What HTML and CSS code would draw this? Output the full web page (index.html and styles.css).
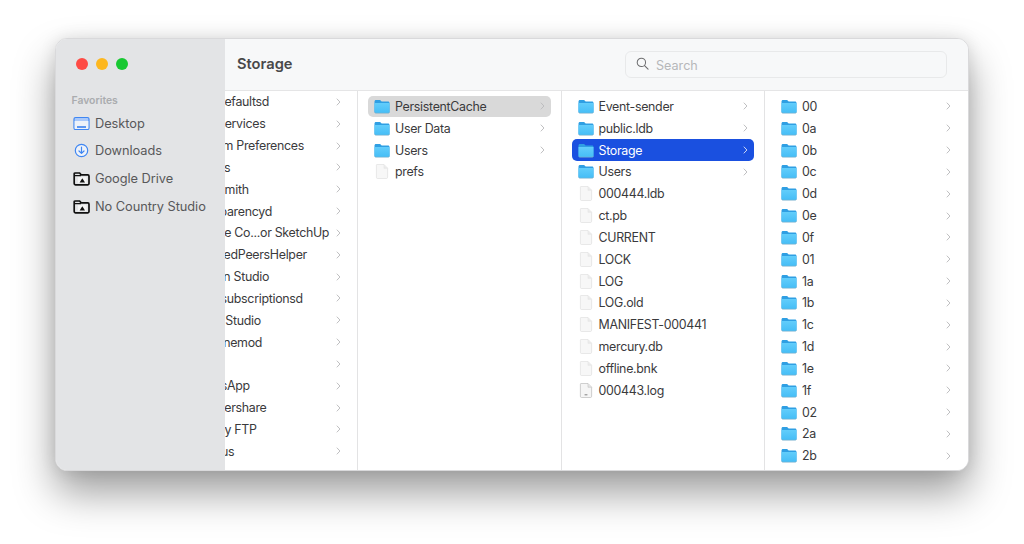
FILE: index.html
```html
<!DOCTYPE html>
<html lang="en">
<head>
<meta charset="utf-8">
<title>Storage</title>
<link rel="stylesheet" href="styles.css">
</head>
<body>
<svg class="defs" width="0" height="0" aria-hidden="true">
  <defs>
    <linearGradient id="fg" x1="0" y1="0" x2="0" y2="1"><stop offset="0" stop-color="#62cdfb"/><stop offset="1" stop-color="#45bdf6"/></linearGradient>
    <symbol id="folder" viewBox="0 0 16 14">
      <path d="M.5 2.2C.5 1.2 1.1.6 2 .6h3.6c.7 0 1 .2 1.4.7l.6.7h6.4c1 0 1.5.6 1.5 1.5v8.4c0 1-.6 1.5-1.5 1.5H2c-1 0-1.5-.6-1.5-1.5z" fill="#2f9fe3"/>
      <path d="M.5 3.6h15v8.6c0 1-.6 1.5-1.5 1.5H2c-1 0-1.5-.6-1.5-1.5z" fill="url(#fg)"/>
      <path d="M.5 12.6c.2.8.7 1.1 1.5 1.1h12c.8 0 1.3-.3 1.5-1.1" fill="none" stroke="#8fa9b8" stroke-width=".5"/>
    </symbol>
    <symbol id="file" viewBox="0 0 14 16">
      <path d="M1.5.5h7.6l3.9 4v9.6c0 .8-.5 1.4-1.3 1.4H2.2c-.8 0-1.2-.6-1.2-1.4V1.9C1 1 1 .5 1.5.5z" fill="#f7f7f7" stroke="#e2e2e2" stroke-width=".8"/>
      <path d="M9.1.7v3.8H13" fill="#ececec" stroke="#e2e2e2" stroke-width=".6"/>
    </symbol>
    <symbol id="log" viewBox="0 0 14 16">
      <path d="M1.5.5h7.6l3.9 4v9.6c0 .8-.5 1.4-1.3 1.4H2.2c-.8 0-1.2-.6-1.2-1.4V1.9C1 1 1 .5 1.5.5z" fill="#f5f5f5" stroke="#bdbdbd" stroke-width=".8"/>
      <path d="M9.1.7v3.8H13" fill="#e6e6e6" stroke="#bdbdbd" stroke-width=".6"/>
      <path d="M5.5 12.6h3" stroke="#777" stroke-width="1"/>
    </symbol>
    <symbol id="chev" viewBox="0 0 6 10">
      <path d="M1.2 1.2 4.8 5 1.2 8.8" fill="none" stroke="currentColor" stroke-width="1.2" stroke-linecap="round" stroke-linejoin="round"/>
    </symbol>
    <symbol id="drive" viewBox="0 0 17 15">
      <path d="M1.2 3v9.6c0 .8.4 1.3 1.2 1.3h12.4c.8 0 1.2-.5 1.2-1.3V5.2c0-.8-.4-1.3-1.2-1.3H8.2L6.6 2H2.4c-.8 0-1.2.3-1.2 1z" fill="#e3e4e6" stroke="#111" stroke-width="1.7"/>
      <path d="M1.2 4.6h6.8" stroke="#111" stroke-width="1.3"/>
      <rect x="5" y="6.2" width="8.6" height="6" fill="#f5f5f5"/>
      <path d="M6.6 11.4 9.3 7.3 12 11.4z" fill="#111"/>
    </symbol>
  </defs>
</svg>
<div class="window">
  <aside class="sidebar">
    <div class="lights"><span class="light red"></span><span class="light amber"></span><span class="light green"></span></div>
    <div class="fav-title">Favorites</div>
    <ul class="fav-list">
      <li class="fav">
        <svg class="fav-icon" viewBox="0 0 17 15"><rect x="1" y="1.5" width="15" height="12" rx="1.6" fill="#a9c8fa" stroke="#3f86f2" stroke-width="1.2"/><path d="M1.6 5h13.8v7.3c0 .4-.3.7-.7.7H2.3c-.4 0-.7-.3-.7-.7z" fill="#eef2f9"/><path d="M4 11h9" stroke="#2f78ec" stroke-width="1.3"/></svg>
        <span>Desktop</span>
      </li>
      <li class="fav">
        <svg class="fav-icon" viewBox="0 0 17 15"><circle cx="8.5" cy="7.5" r="6.2" fill="#eef2f9" stroke="#3f86f2" stroke-width="1.2"/><path d="M8.5 4.2v6M6 8l2.5 2.4L11 8" fill="none" stroke="#3f86f2" stroke-width="1.2" stroke-linecap="round" stroke-linejoin="round"/></svg>
        <span>Downloads</span>
      </li>
      <li class="fav"><svg class="fav-icon"><use href="#drive"/></svg><span>Google Drive</span></li>
      <li class="fav"><svg class="fav-icon"><use href="#drive"/></svg><span>No Country Studio</span></li>
    </ul>
  </aside>
  <main class="main">
    <header class="titlebar">
      <h1 class="title">Storage</h1>
      <div class="search">
        <svg class="search-icon" viewBox="0 0 14 14"><circle cx="5.8" cy="5.8" r="4.5" fill="none" stroke="#6d6d6f" stroke-width="1.1"/><path d="M9.2 9.2 13 13" stroke="#6d6d6f" stroke-width="1.2" stroke-linecap="round"/></svg>
        <span>Search</span>
      </div>
    </header>
    <div class="browser">
      <section class="col first">
        <div class="row"><span class="name">Cloudefaultsd</span><svg class="chev"><use href="#chev"/></svg></div>
        <div class="row"><span class="name">WebServices</span><svg class="chev"><use href="#chev"/></svg></div>
        <div class="row"><span class="name">System Preferences</span><svg class="chev"><use href="#chev"/></svg></div>
        <div class="row"><span class="name">Photos</span><svg class="chev"><use href="#chev"/></svg></div>
        <div class="row"><span class="name">Ann Smith</span><svg class="chev"><use href="#chev"/></svg></div>
        <div class="row"><span class="name">transparencyd</span><svg class="chev"><use href="#chev"/></svg></div>
        <div class="row"><span class="name">Source Co...or SketchUp</span><svg class="chev"><use href="#chev"/></svg></div>
        <div class="row"><span class="name">MappedPeersHelper</span><svg class="chev"><use href="#chev"/></svg></div>
        <div class="row"><span class="name">Design Studio</span><svg class="chev"><use href="#chev"/></svg></div>
        <div class="row"><span class="name">Appssubscriptionsd</span><svg class="chev"><use href="#chev"/></svg></div>
        <div class="row"><span class="name">Logic Studio</span><svg class="chev"><use href="#chev"/></svg></div>
        <div class="row"><span class="name">Micronemod</span><svg class="chev"><use href="#chev"/></svg></div>
        <div class="row"><span class="name">Sky</span><svg class="chev"><use href="#chev"/></svg></div>
        <div class="row"><span class="name">WhatsApp</span><svg class="chev"><use href="#chev"/></svg></div>
        <div class="row"><span class="name">Wondershare</span><svg class="chev"><use href="#chev"/></svg></div>
        <div class="row"><span class="name">Cloudy FTP</span><svg class="chev"><use href="#chev"/></svg></div>
        <div class="row"><span class="name">Nimbus</span><svg class="chev"><use href="#chev"/></svg></div>
      </section>
      <section class="col">
        <div class="row soft"><svg class="icon"><use href="#folder"/></svg><span class="name">PersistentCache</span><svg class="chev"><use href="#chev"/></svg></div>
        <div class="row"><svg class="icon"><use href="#folder"/></svg><span class="name">User Data</span><svg class="chev"><use href="#chev"/></svg></div>
        <div class="row"><svg class="icon"><use href="#folder"/></svg><span class="name">Users</span><svg class="chev"><use href="#chev"/></svg></div>
        <div class="row"><svg class="icon"><use href="#file"/></svg><span class="name">prefs</span></div>
      </section>
      <section class="col">
        <div class="row"><svg class="icon"><use href="#folder"/></svg><span class="name">Event-sender</span><svg class="chev"><use href="#chev"/></svg></div>
        <div class="row"><svg class="icon"><use href="#folder"/></svg><span class="name">public.ldb</span><svg class="chev"><use href="#chev"/></svg></div>
        <div class="row active"><svg class="icon"><use href="#folder"/></svg><span class="name">Storage</span><svg class="chev"><use href="#chev"/></svg></div>
        <div class="row"><svg class="icon"><use href="#folder"/></svg><span class="name">Users</span><svg class="chev"><use href="#chev"/></svg></div>
        <div class="row"><svg class="icon"><use href="#file"/></svg><span class="name">000444.ldb</span></div>
        <div class="row"><svg class="icon"><use href="#file"/></svg><span class="name">ct.pb</span></div>
        <div class="row"><svg class="icon"><use href="#file"/></svg><span class="name">CURRENT</span></div>
        <div class="row"><svg class="icon"><use href="#file"/></svg><span class="name">LOCK</span></div>
        <div class="row"><svg class="icon"><use href="#file"/></svg><span class="name">LOG</span></div>
        <div class="row"><svg class="icon"><use href="#file"/></svg><span class="name">LOG.old</span></div>
        <div class="row"><svg class="icon"><use href="#file"/></svg><span class="name">MANIFEST-000441</span></div>
        <div class="row"><svg class="icon"><use href="#file"/></svg><span class="name">mercury.db</span></div>
        <div class="row"><svg class="icon"><use href="#file"/></svg><span class="name">offline.bnk</span></div>
        <div class="row"><svg class="icon"><use href="#log"/></svg><span class="name">000443.log</span></div>
      </section>
      <section class="col last">
        <div class="row"><svg class="icon"><use href="#folder"/></svg><span class="name">00</span><svg class="chev"><use href="#chev"/></svg></div>
        <div class="row"><svg class="icon"><use href="#folder"/></svg><span class="name">0a</span><svg class="chev"><use href="#chev"/></svg></div>
        <div class="row"><svg class="icon"><use href="#folder"/></svg><span class="name">0b</span><svg class="chev"><use href="#chev"/></svg></div>
        <div class="row"><svg class="icon"><use href="#folder"/></svg><span class="name">0c</span><svg class="chev"><use href="#chev"/></svg></div>
        <div class="row"><svg class="icon"><use href="#folder"/></svg><span class="name">0d</span><svg class="chev"><use href="#chev"/></svg></div>
        <div class="row"><svg class="icon"><use href="#folder"/></svg><span class="name">0e</span><svg class="chev"><use href="#chev"/></svg></div>
        <div class="row"><svg class="icon"><use href="#folder"/></svg><span class="name">0f</span><svg class="chev"><use href="#chev"/></svg></div>
        <div class="row"><svg class="icon"><use href="#folder"/></svg><span class="name">01</span><svg class="chev"><use href="#chev"/></svg></div>
        <div class="row"><svg class="icon"><use href="#folder"/></svg><span class="name">1a</span><svg class="chev"><use href="#chev"/></svg></div>
        <div class="row"><svg class="icon"><use href="#folder"/></svg><span class="name">1b</span><svg class="chev"><use href="#chev"/></svg></div>
        <div class="row"><svg class="icon"><use href="#folder"/></svg><span class="name">1c</span><svg class="chev"><use href="#chev"/></svg></div>
        <div class="row"><svg class="icon"><use href="#folder"/></svg><span class="name">1d</span><svg class="chev"><use href="#chev"/></svg></div>
        <div class="row"><svg class="icon"><use href="#folder"/></svg><span class="name">1e</span><svg class="chev"><use href="#chev"/></svg></div>
        <div class="row"><svg class="icon"><use href="#folder"/></svg><span class="name">1f</span><svg class="chev"><use href="#chev"/></svg></div>
        <div class="row"><svg class="icon"><use href="#folder"/></svg><span class="name">02</span><svg class="chev"><use href="#chev"/></svg></div>
        <div class="row"><svg class="icon"><use href="#folder"/></svg><span class="name">2a</span><svg class="chev"><use href="#chev"/></svg></div>
        <div class="row"><svg class="icon"><use href="#folder"/></svg><span class="name">2b</span><svg class="chev"><use href="#chev"/></svg></div>
        <div class="row"><svg class="icon"><use href="#folder"/></svg><span class="name"></span></div>
      </section>
    </div>
  </main>
</div>
</body>
</html>
```
FILE: styles.css
```css
* { box-sizing: border-box; }
html, body { margin: 0; height: 100%; overflow: hidden; background: #fff; }
body { padding: 38px 55px 0; font-family: Inter, "Liberation Sans", sans-serif; color: #3c3c3e; font-size: 12.4px; }
.defs { display: block; height: 0; }
.window {
  display: flex;
  width: 914px;
  height: 433px;
  border: 1px solid #d9d9db;
  border-radius: 12px;
  overflow: hidden;
  background: #fff;
  box-shadow: 0 22px 40px rgba(0,0,0,.38), 0 0 16px rgba(0,0,0,.1);
}
.sidebar {
  position: relative;
  z-index: 1;
  flex: 0 0 169px;
  background: #e3e4e6;
  padding: 18.5px 0 0 20px;
}
.lights { display: flex; gap: 7.8px; }
.light { width: 12px; height: 12px; border-radius: 50%; }
.red { background: #fe4b45; }
.amber { background: #fdb71f; }
.green { background: #18c832; }
.fav-title { margin: 24.5px 0 0 -4.5px; font-size: 10.4px; font-weight: 600; color: #aaacaf; line-height: 13px; }
.fav-list { list-style: none; margin: 2.2px 0 0 -3px; padding: 0; }
.fav { display: flex; align-items: center; height: 27.8px; color: #58585a; font-size: 12.8px; letter-spacing: -.05px; }
.fav-icon { width: 17px; height: 15px; margin-right: 5px; flex: none; }
.main { flex: 1; min-width: 0; display: flex; flex-direction: column; }
.titlebar {
  flex: 0 0 52px;
  display: flex;
  align-items: center;
  justify-content: space-between;
  padding: 0 21px 0 12px;
  background: #f7f8f9;
  border-bottom: 1px solid #e5e5e6;
}
.title { margin: 0 0 2px; font-size: 14.7px; font-weight: 600; color: #48484a; }
.search {
  display: flex;
  align-items: center;
  width: 322px;
  height: 27px;
  margin-bottom: 1px;
  padding: 2px 0 0 10px;
  border: 1px solid #e8e9ea;
  border-radius: 6px;
  background: #f7f8f9;
  color: #b6b7b9;
  font-size: 12.6px;
}
.search-icon { width: 13px; height: 13px; margin: -3px 7px 0 0; }
.browser { flex: 1; min-height: 0; display: flex; margin-left: -70.5px; background: #fff; overflow: hidden; }
.col { flex: 0 0 203.5px; padding: 4.5px 10px 0; border-right: 1px solid #e3e3e4; overflow: hidden; letter-spacing: -.3px; }
.col.first { padding-top: 0; }
.col.last { flex: 1 1 auto; border-right: 0; padding-right: 11px; }
.row { display: flex; align-items: center; height: 21.83px; padding: 0 6px 0 6px; border-radius: 5px; white-space: nowrap; color: #3a3a3c; }
.row > .name:first-child { margin-left: 21px; }
.icon { width: 16px; height: 15px; margin-right: 5px; flex: none; }
.name { flex: 1; min-width: 0; }
.chev { width: 5px; height: 8px; flex: none; color: #bcbcbe; }
.soft { background: #d9d9d9; }
.active { background: #1a50e0; color: #fff; }
.active .chev { color: #d5ddf5; }
```
